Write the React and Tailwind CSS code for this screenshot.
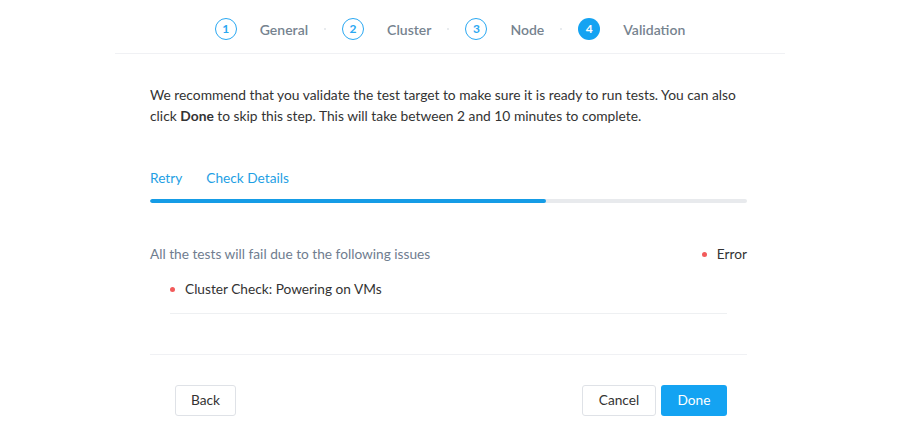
const steps = [
  { n: 1, label: 'General' },
  { n: 2, label: 'Cluster' },
  { n: 3, label: 'Node' },
  { n: 4, label: 'Validation', active: true },
]

function Step({ n, label, active }) {
  return (
    <div className="flex items-center">
      {active ? (
        <span className="flex h-[22px] w-[22px] items-center justify-center rounded-full bg-[#14a3f2] text-[12px] font-bold text-white">
          {n}
        </span>
      ) : (
        <span className="flex h-[22px] w-[22px] items-center justify-center rounded-full border-[1.5px] border-[#2aa8f2] text-[12px] font-bold text-[#2aa8f2]">
          {n}
        </span>
      )}
      <span className="ml-[23px] text-[14px] font-semibold text-[#76838f]">{label}</span>
    </div>
  )
}

export default function App() {
  return (
    <div className="h-[437px] w-[900px] bg-white font-['Lato',sans-serif] text-[#333]">
      <div className="mx-auto flex h-[54px] w-[670px] items-center justify-center border-b border-[#f0f1f4] pt-[5px]">
        {steps.map((s, i) => (
          <div key={s.n} className="flex items-center">
            {i > 0 && <span className="mx-[16px] h-[2px] w-[2px] rounded-full bg-[#e1e4e8]" />}
            <Step {...s} />
          </div>
        ))}
      </div>

      <div className="ml-[150px] w-[597px]">
        <p className="mt-[30px] text-[13.8px] leading-[21px] text-[#333]">
          We recommend that you validate the test target to make sure it is ready to run tests. You can also
          click <span className="font-bold">Done</span> to skip this step. This will take between 2 and 10 minutes to complete.
        </p>

        <div className="mt-[43px] flex gap-[24px] text-[13.7px] leading-[18px] text-[#1f9fe4]">
          <span>Retry</span>
          <span>Check Details</span>
        </div>

        <div className="mt-[12px] h-[4px] w-full overflow-hidden rounded-full bg-[#e8eaed]">
          <div className="h-full rounded-full bg-[#159ce6]" style={{ width: '66.3%' }} />
        </div>

        <div className="mt-[42px] flex items-center justify-between text-[13.7px] leading-[18px]">
          <span className="text-[#6f7d8f]">All the tests will fail due to the following issues</span>
          <span className="flex items-center gap-[10px] text-[#333]">
            <span className="h-[5px] w-[5px] rounded-full bg-[#f25b5b]" />
            Error
          </span>
        </div>

        <div className="mx-[20px] mt-[17px] border-b border-[#eef0f2] pb-[15px]">
          <div className="flex items-center gap-[10px] text-[13.7px] leading-[18px]">
            <span className="h-[5px] w-[5px] rounded-full bg-[#f25b5b]" />
            Cluster Check: Powering on VMs
          </div>
        </div>

        <div className="mt-[40px] border-b border-[#f0f1f4]" />

        <div className="mt-[30px] flex items-center justify-between pl-[25px] pr-[20px] text-[13.7px]">
          <button className="h-[31px] w-[61px] rounded-[3px] border border-[#dfe2e7] bg-white text-[#333]">Back</button>
          <div className="flex gap-[5px]">
            <button className="h-[31px] w-[74px] rounded-[3px] border border-[#dfe2e7] bg-white text-[#333]">Cancel</button>
            <button className="h-[31px] w-[66px] rounded-[3px] bg-[#14a3f2] text-white">Done</button>
          </div>
        </div>
      </div>
    </div>
  )
}
